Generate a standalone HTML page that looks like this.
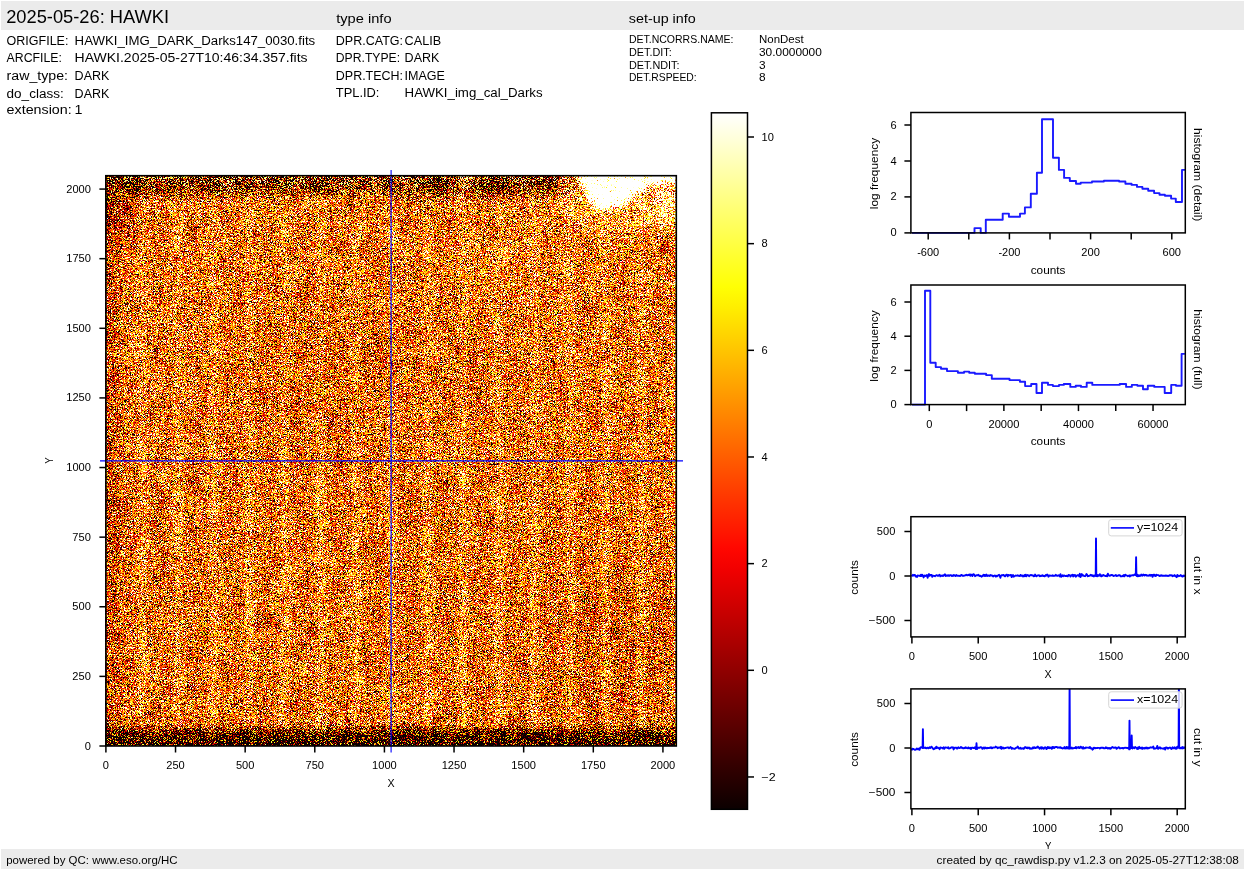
<!DOCTYPE html>
<html><head><meta charset="utf-8"><title>HAWKI raw display</title>
<style>html,body{margin:0;padding:0;background:#fff;overflow:hidden}svg{display:block;will-change:transform}text{font-family:"Liberation Sans",sans-serif}</style>
</head><body>
<svg width="1245" height="870" viewBox="0 0 1245 870">
<defs><linearGradient id="cbg" x1="0" y1="1" x2="0" y2="0"><stop offset="0.0000" stop-color="rgb(11,0,0)"/><stop offset="0.0312" stop-color="rgb(32,0,0)"/><stop offset="0.0625" stop-color="rgb(52,0,0)"/><stop offset="0.0938" stop-color="rgb(73,0,0)"/><stop offset="0.1250" stop-color="rgb(94,0,0)"/><stop offset="0.1562" stop-color="rgb(115,0,0)"/><stop offset="0.1875" stop-color="rgb(136,0,0)"/><stop offset="0.2188" stop-color="rgb(157,0,0)"/><stop offset="0.2500" stop-color="rgb(178,0,0)"/><stop offset="0.2812" stop-color="rgb(199,0,0)"/><stop offset="0.3125" stop-color="rgb(220,0,0)"/><stop offset="0.3438" stop-color="rgb(241,0,0)"/><stop offset="0.3750" stop-color="rgb(255,7,0)"/><stop offset="0.4062" stop-color="rgb(255,28,0)"/><stop offset="0.4375" stop-color="rgb(255,48,0)"/><stop offset="0.4688" stop-color="rgb(255,69,0)"/><stop offset="0.5000" stop-color="rgb(255,90,0)"/><stop offset="0.5312" stop-color="rgb(255,111,0)"/><stop offset="0.5625" stop-color="rgb(255,132,0)"/><stop offset="0.5938" stop-color="rgb(255,153,0)"/><stop offset="0.6250" stop-color="rgb(255,174,0)"/><stop offset="0.6562" stop-color="rgb(255,195,0)"/><stop offset="0.6875" stop-color="rgb(255,216,0)"/><stop offset="0.7188" stop-color="rgb(255,237,0)"/><stop offset="0.7500" stop-color="rgb(255,255,4)"/><stop offset="0.7812" stop-color="rgb(255,255,35)"/><stop offset="0.8125" stop-color="rgb(255,255,67)"/><stop offset="0.8438" stop-color="rgb(255,255,98)"/><stop offset="0.8750" stop-color="rgb(255,255,129)"/><stop offset="0.9062" stop-color="rgb(255,255,161)"/><stop offset="0.9375" stop-color="rgb(255,255,192)"/><stop offset="0.9688" stop-color="rgb(255,255,224)"/><stop offset="1.0000" stop-color="rgb(255,255,255)"/></linearGradient></defs>
<rect x="0" y="0" width="1245" height="870" fill="#fff"/>
<rect x="1.00" y="1.00" width="1243.00" height="29.00" fill="#ebebeb"/>
<text x="6.20" y="23.00" font-size="17.50" text-anchor="start" textLength="162.95" lengthAdjust="spacingAndGlyphs" fill="#000">2025-05-26: HAWKI</text>
<text x="336.20" y="22.60" font-size="13.12" text-anchor="start" textLength="55.34" lengthAdjust="spacingAndGlyphs" fill="#000">type info</text>
<text x="628.80" y="22.60" font-size="13.12" text-anchor="start" textLength="66.89" lengthAdjust="spacingAndGlyphs" fill="#000">set-up info</text>
<text x="6.60" y="44.85" font-size="13.12" text-anchor="start" textLength="61.85" lengthAdjust="spacingAndGlyphs" fill="#000">ORIGFILE:</text>
<text x="74.60" y="44.85" font-size="13.12" text-anchor="start" textLength="240.61" lengthAdjust="spacingAndGlyphs" fill="#000">HAWKI_IMG_DARK_Darks147_0030.fits</text>
<text x="6.60" y="61.90" font-size="13.12" text-anchor="start" textLength="55.29" lengthAdjust="spacingAndGlyphs" fill="#000">ARCFILE:</text>
<text x="74.60" y="61.90" font-size="13.12" text-anchor="start" textLength="233.00" lengthAdjust="spacingAndGlyphs" fill="#000">HAWKI.2025-05-27T10:46:34.357.fits</text>
<text x="6.60" y="79.90" font-size="13.12" text-anchor="start" textLength="61.41" lengthAdjust="spacingAndGlyphs" fill="#000">raw_type:</text>
<text x="74.60" y="79.90" font-size="13.12" text-anchor="start" textLength="34.84" lengthAdjust="spacingAndGlyphs" fill="#000">DARK</text>
<text x="6.60" y="97.70" font-size="13.12" text-anchor="start" textLength="57.07" lengthAdjust="spacingAndGlyphs" fill="#000">do_class:</text>
<text x="74.60" y="97.70" font-size="13.12" text-anchor="start" textLength="34.84" lengthAdjust="spacingAndGlyphs" fill="#000">DARK</text>
<text x="6.60" y="113.60" font-size="13.12" text-anchor="start" textLength="65.15" lengthAdjust="spacingAndGlyphs" fill="#000">extension:</text>
<text x="74.60" y="113.60" font-size="13.12" text-anchor="start" textLength="7.95" lengthAdjust="spacingAndGlyphs" fill="#000">1</text>
<text x="335.80" y="44.80" font-size="13.12" text-anchor="start" textLength="67.22" lengthAdjust="spacingAndGlyphs" fill="#000">DPR.CATG:</text>
<text x="404.60" y="44.80" font-size="13.12" text-anchor="start" textLength="36.51" lengthAdjust="spacingAndGlyphs" fill="#000">CALIB</text>
<text x="335.80" y="61.80" font-size="13.12" text-anchor="start" textLength="64.29" lengthAdjust="spacingAndGlyphs" fill="#000">DPR.TYPE:</text>
<text x="404.60" y="61.80" font-size="13.12" text-anchor="start" textLength="34.84" lengthAdjust="spacingAndGlyphs" fill="#000">DARK</text>
<text x="335.80" y="79.80" font-size="13.12" text-anchor="start" textLength="67.25" lengthAdjust="spacingAndGlyphs" fill="#000">DPR.TECH:</text>
<text x="404.60" y="79.80" font-size="13.12" text-anchor="start" textLength="40.39" lengthAdjust="spacingAndGlyphs" fill="#000">IMAGE</text>
<text x="335.80" y="96.60" font-size="13.12" text-anchor="start" textLength="43.63" lengthAdjust="spacingAndGlyphs" fill="#000">TPL.ID:</text>
<text x="404.60" y="96.60" font-size="13.12" text-anchor="start" textLength="138.02" lengthAdjust="spacingAndGlyphs" fill="#000">HAWKI_img_cal_Darks</text>
<text x="628.90" y="43.20" font-size="10.94" text-anchor="start" textLength="104.54" lengthAdjust="spacingAndGlyphs" fill="#000">DET.NCORRS.NAME:</text>
<text x="759.00" y="43.20" font-size="10.94" text-anchor="start" textLength="44.64" lengthAdjust="spacingAndGlyphs" fill="#000">NonDest</text>
<text x="628.90" y="55.90" font-size="10.94" text-anchor="start" textLength="42.80" lengthAdjust="spacingAndGlyphs" fill="#000">DET.DIT:</text>
<text x="759.00" y="55.90" font-size="10.94" text-anchor="start" textLength="62.86" lengthAdjust="spacingAndGlyphs" fill="#000">30.0000000</text>
<text x="628.90" y="68.60" font-size="10.94" text-anchor="start" textLength="50.58" lengthAdjust="spacingAndGlyphs" fill="#000">DET.NDIT:</text>
<text x="759.00" y="68.60" font-size="10.94" text-anchor="start" textLength="6.62" lengthAdjust="spacingAndGlyphs" fill="#000">3</text>
<text x="628.90" y="81.30" font-size="10.94" text-anchor="start" textLength="67.76" lengthAdjust="spacingAndGlyphs" fill="#000">DET.RSPEED:</text>
<text x="759.00" y="81.30" font-size="10.94" text-anchor="start" textLength="6.62" lengthAdjust="spacingAndGlyphs" fill="#000">8</text>
<filter id="imf" filterUnits="userSpaceOnUse" x="105.90" y="175.70" width="570.40" height="570.30" color-interpolation-filters="sRGB">
<feTurbulence type="fractalNoise" baseFrequency="1.7" numOctaves="1" seed="7" result="t"/>
<feColorMatrix in="t" type="matrix" values="1 0 0 0 0  1 0 0 0 0  1 0 0 0 0  0 0 0 0 1" result="n1"/>
<feTurbulence type="fractalNoise" baseFrequency="0.07" numOctaves="3" seed="12" result="t2"/>
<feColorMatrix in="t2" type="matrix" values="1 0 0 0 0  1 0 0 0 0  1 0 0 0 0  0 0 0 0 1" result="n2"/>
<feComposite in="n1" in2="n2" operator="arithmetic" k1="0" k2="0.95" k3="0.05" k4="0" result="n"/>
<feColorMatrix in="SourceGraphic" type="matrix" values="1 0 0 0 0  1 0 0 0 0  1 0 0 0 0  0 0 0 0 1" result="F"/>
<feColorMatrix in="SourceGraphic" type="matrix" values="0 -1 0 0 1  0 -1 0 0 1  0 -1 0 0 1  0 0 0 0 1" result="Mi"/>
<feColorMatrix in="SourceGraphic" type="matrix" values="0 1 0 0 0  0 1 0 0 0  0 1 0 0 0  0 0 0 0 1" result="M"/>
<feComposite in="F" in2="n" operator="arithmetic" k1="0" k2="2" k3="3.3" k4="-2.15" result="va"/>
<feComposite in="F" in2="n" operator="arithmetic" k1="0" k2="2" k3="8.0" k4="-4.5" result="vb"/>
<feComposite in="va" in2="Mi" operator="arithmetic" k1="1" k2="0" k3="0" k4="0" result="a1"/>
<feComposite in="vb" in2="M" operator="arithmetic" k1="1" k2="0" k3="0" k4="0" result="b1"/>
<feComposite in="a1" in2="b1" operator="arithmetic" k1="0" k2="1" k3="1" k4="0" result="v"/>
<feComponentTransfer in="v">
<feFuncR type="table" tableValues="0.0416 0.0621 0.0826 0.1031 0.1236 0.1441 0.1647 0.1852 0.2057 0.2262 0.2467 0.2672 0.2877 0.3082 0.3287 0.3492 0.3697 0.3903 0.4108 0.4313 0.4518 0.4723 0.4928 0.5133 0.5338 0.5543 0.5748 0.5954 0.6159 0.6364 0.6569 0.6774 0.6979 0.7184 0.7389 0.7594 0.7799 0.8004 0.821 0.8415 0.862 0.8825 0.903 0.9235 0.944 0.9645 0.985 1 1 1 1 1 1 1 1 1 1 1 1 1 1 1 1 1 1 1 1 1 1 1 1 1 1 1 1 1 1 1 1 1 1 1 1 1 1 1 1 1 1 1 1 1 1 1 1 1 1 1 1 1 1 1 1 1 1 1 1 1 1 1 1 1 1 1 1 1 1 1 1 1 1 1 1 1 1 1 1 1 1"/>
<feFuncG type="table" tableValues="0 0 0 0 0 0 0 0 0 0 0 0 0 0 0 0 0 0 0 0 0 0 0 0 0 0 0 0 0 0 0 0 0 0 0 0 0 0 0 0 0 0 0 0 0 0 0 0.0055 0.026 0.0466 0.0671 0.0876 0.1081 0.1286 0.1491 0.1696 0.1901 0.2106 0.2311 0.2516 0.2721 0.2926 0.3132 0.3337 0.3542 0.3747 0.3952 0.4157 0.4362 0.4567 0.4772 0.4977 0.5182 0.5387 0.5592 0.5798 0.6003 0.6208 0.6413 0.6618 0.6823 0.7028 0.7233 0.7438 0.7643 0.7848 0.8053 0.8258 0.8464 0.8669 0.8874 0.9079 0.9284 0.9489 0.9694 0.9899 1 1 1 1 1 1 1 1 1 1 1 1 1 1 1 1 1 1 1 1 1 1 1 1 1 1 1 1 1 1 1 1 1"/>
<feFuncB type="table" tableValues="0 0 0 0 0 0 0 0 0 0 0 0 0 0 0 0 0 0 0 0 0 0 0 0 0 0 0 0 0 0 0 0 0 0 0 0 0 0 0 0 0 0 0 0 0 0 0 0 0 0 0 0 0 0 0 0 0 0 0 0 0 0 0 0 0 0 0 0 0 0 0 0 0 0 0 0 0 0 0 0 0 0 0 0 0 0 0 0 0 0 0 0 0 0 0 0 0.0156 0.0464 0.0771 0.1079 0.1387 0.1694 0.2002 0.231 0.2617 0.2925 0.3232 0.354 0.3848 0.4155 0.4463 0.4771 0.5078 0.5386 0.5693 0.6001 0.6309 0.6616 0.6924 0.7231 0.7539 0.7847 0.8154 0.8462 0.877 0.9077 0.9385 0.9692 1"/>
<feFuncA type="identity"/>
</feComponentTransfer>
</filter>
<linearGradient id="strpB" gradientUnits="userSpaceOnUse" x1="89.08" y1="0" x2="124.725" y2="0" spreadMethod="repeat">
<stop offset="0" stop-color="#000" stop-opacity="0.0595"/><stop offset="0.3" stop-color="#000" stop-opacity="0.0425"/><stop offset="0.42" stop-color="#000" stop-opacity="0"/><stop offset="0.58" stop-color="#000" stop-opacity="0"/><stop offset="0.7" stop-color="#000" stop-opacity="0.0425"/><stop offset="1" stop-color="#000" stop-opacity="0.0595"/>
</linearGradient>
<linearGradient id="strpR" gradientUnits="userSpaceOnUse" x1="89.08" y1="0" x2="124.725" y2="0" spreadMethod="repeat">
<stop offset="0.3" stop-color="#f00" stop-opacity="0"/><stop offset="0.5" stop-color="#f00" stop-opacity="0.085"/><stop offset="0.7" stop-color="#f00" stop-opacity="0"/>
</linearGradient>
<linearGradient id="vfade" x1="0" y1="0" x2="0" y2="1"><stop offset="0" stop-color="#fff" stop-opacity="0.6"/><stop offset="0.45" stop-color="#fff" stop-opacity="0.7"/><stop offset="0.55" stop-color="#fff" stop-opacity="1"/><stop offset="1" stop-color="#fff" stop-opacity="1"/></linearGradient>
<mask id="smask" maskUnits="userSpaceOnUse" x="105.9" y="175.7" width="570.4" height="570.3"><rect x="105.9" y="175.7" width="570.4" height="570.3" fill="url(#vfade)"/></mask>
<linearGradient id="topv" x1="0" y1="0" x2="0" y2="1"><stop offset="0" stop-color="#0f0" stop-opacity="0.8"/><stop offset="0.6" stop-color="#0f0" stop-opacity="0.4"/><stop offset="1" stop-color="#0f0" stop-opacity="0"/></linearGradient>
<linearGradient id="botv" x1="0" y1="1" x2="0" y2="0"><stop offset="0" stop-color="#0f0" stop-opacity="0.7"/><stop offset="0.6" stop-color="#0f0" stop-opacity="0.35"/><stop offset="1" stop-color="#0f0" stop-opacity="0"/></linearGradient>
<linearGradient id="topb" x1="0" y1="0" x2="0" y2="1"><stop offset="0" stop-color="#000" stop-opacity="0.22"/><stop offset="0.6" stop-color="#000" stop-opacity="0.15"/><stop offset="1" stop-color="#000" stop-opacity="0"/></linearGradient>
<linearGradient id="botb" x1="0" y1="1" x2="0" y2="0"><stop offset="0" stop-color="#000" stop-opacity="0.7"/><stop offset="0.5" stop-color="#000" stop-opacity="0.5"/><stop offset="1" stop-color="#000" stop-opacity="0"/></linearGradient>
<linearGradient id="leftb" x1="0" y1="0" x2="1" y2="0"><stop offset="0" stop-color="#000" stop-opacity="0.2"/><stop offset="1" stop-color="#000" stop-opacity="0"/></linearGradient>
<filter id="bl" x="-50%" y="-50%" width="200%" height="200%"><feGaussianBlur stdDeviation="3"/></filter>
<filter id="bl2" x="-50%" y="-50%" width="200%" height="200%"><feGaussianBlur stdDeviation="5"/></filter>
<filter id="bl8" x="-50%" y="-50%" width="200%" height="200%"><feGaussianBlur stdDeviation="9"/></filter>
<filter id="bl20" x="-50%" y="-50%" width="200%" height="200%"><feGaussianBlur stdDeviation="20"/></filter>
<clipPath id="imclip"><rect x="105.9" y="175.7" width="570.4" height="570.3"/></clipPath>

<g filter="url(#imf)"><g clip-path="url(#imclip)">
<rect x="105.90" y="175.70" width="570.40" height="570.30" fill="rgb(135,0,0)"/>
<g mask="url(#smask)"><rect x="105.90" y="175.70" width="570.40" height="570.30" fill="url(#strpB)"/><rect x="105.90" y="175.70" width="570.40" height="570.30" fill="url(#strpR)"/></g>
<ellipse cx="111.9" cy="200.7" rx="14" ry="40" fill="#000" fill-opacity="0.35" filter="url(#bl20)"/>
<ellipse cx="320" cy="370" rx="90" ry="70" fill="#000" fill-opacity="0.03" filter="url(#bl20)"/>
<ellipse cx="460" cy="365" rx="45" ry="40" fill="#000" fill-opacity="0.03" filter="url(#bl20)"/>
<ellipse cx="610" cy="640" rx="70" ry="70" fill="#000" fill-opacity="0.05" filter="url(#bl20)"/>
<ellipse cx="520" cy="260" rx="80" ry="40" fill="#f00" fill-opacity="0.04" filter="url(#bl20)"/>
<rect x="105.90" y="175.70" width="18" height="570.30" fill="url(#leftb)"/>
<rect x="105.90" y="175.70" width="570.40" height="26" fill="url(#topb)"/>
<ellipse cx="137" cy="185.7" rx="14" ry="8" fill="#000" fill-opacity="0.35" filter="url(#bl)"/>
<ellipse cx="170" cy="185.7" rx="12" ry="8" fill="#000" fill-opacity="0.3" filter="url(#bl)"/>
<ellipse cx="212" cy="185.7" rx="10" ry="8" fill="#000" fill-opacity="0.28" filter="url(#bl)"/>
<ellipse cx="245" cy="185.7" rx="11" ry="8" fill="#000" fill-opacity="0.3" filter="url(#bl)"/>
<ellipse cx="277" cy="185.7" rx="12" ry="8" fill="#000" fill-opacity="0.3" filter="url(#bl)"/>
<ellipse cx="320" cy="185.7" rx="14" ry="8" fill="#000" fill-opacity="0.35" filter="url(#bl)"/>
<ellipse cx="356" cy="185.7" rx="8" ry="8" fill="#000" fill-opacity="0.25" filter="url(#bl)"/>
<ellipse cx="390" cy="185.7" rx="8" ry="8" fill="#000" fill-opacity="0.28" filter="url(#bl)"/>
<ellipse cx="434" cy="185.7" rx="15" ry="8" fill="#000" fill-opacity="0.35" filter="url(#bl)"/>
<ellipse cx="495" cy="185.7" rx="18" ry="8" fill="#000" fill-opacity="0.35" filter="url(#bl)"/>
<ellipse cx="546" cy="185.7" rx="18" ry="8" fill="#000" fill-opacity="0.32" filter="url(#bl)"/>
<rect x="105.90" y="724.00" width="570.40" height="22" fill="url(#botb)"/>
<ellipse cx="142" cy="738.0" rx="14" ry="8" fill="#000" fill-opacity="0.24" filter="url(#bl)"/>
<ellipse cx="178" cy="738.0" rx="10" ry="8" fill="#000" fill-opacity="0.2" filter="url(#bl)"/>
<ellipse cx="211" cy="738.0" rx="9" ry="8" fill="#000" fill-opacity="0.2" filter="url(#bl)"/>
<ellipse cx="244" cy="738.0" rx="11" ry="8" fill="#000" fill-opacity="0.2" filter="url(#bl)"/>
<ellipse cx="290" cy="738.0" rx="12" ry="8" fill="#000" fill-opacity="0.16000000000000003" filter="url(#bl)"/>
<ellipse cx="357" cy="738.0" rx="18" ry="8" fill="#000" fill-opacity="0.24" filter="url(#bl)"/>
<ellipse cx="403" cy="738.0" rx="16" ry="8" fill="#000" fill-opacity="0.24" filter="url(#bl)"/>
<ellipse cx="427" cy="738.0" rx="12" ry="8" fill="#000" fill-opacity="0.24" filter="url(#bl)"/>
<ellipse cx="464" cy="738.0" rx="10" ry="8" fill="#000" fill-opacity="0.22400000000000003" filter="url(#bl)"/>
<ellipse cx="499" cy="738.0" rx="10" ry="8" fill="#000" fill-opacity="0.2" filter="url(#bl)"/>
<ellipse cx="535" cy="738.0" rx="10" ry="8" fill="#000" fill-opacity="0.16000000000000003" filter="url(#bl)"/>
<ellipse cx="602" cy="738.0" rx="12" ry="8" fill="#000" fill-opacity="0.2" filter="url(#bl)"/>
<ellipse cx="641" cy="738.0" rx="12" ry="8" fill="#000" fill-opacity="0.2" filter="url(#bl)"/>
<rect x="105.90" y="175.70" width="570.40" height="28" fill="url(#topv)" style="mix-blend-mode:screen"/>
<rect x="105.90" y="720.00" width="570.40" height="26" fill="url(#botv)" style="mix-blend-mode:screen"/>
<ellipse cx="615" cy="187.7" rx="62" ry="48" fill="#f00" fill-opacity="0.16" filter="url(#bl8)"/>
<rect x="652" y="175.7" width="30" height="50" fill="#f00" fill-opacity="0.3" filter="url(#bl2)"/>
<path d="M578,171.7 L581,181 C585,196 592,208 603,208 C616,207 628,202 638,194 C646,188 652,184 660,183 L680,183 L680,171.7 Z" fill="#f00" filter="url(#bl)"/>
</g></g>
<line x1="391.10" y1="170.00" x2="391.10" y2="752.60" stroke="#0000ff" stroke-width="1.1"/>
<line x1="100.00" y1="460.85" x2="683.00" y2="460.85" stroke="#0000ff" stroke-width="1.1"/>
<rect x="105.90" y="175.70" width="570.40" height="570.30" fill="none" stroke="#000" stroke-width="1.6" stroke-linecap="square"/>
<line x1="99.40" y1="746.00" x2="105.90" y2="746.00" stroke="#000" stroke-width="1.5"/>
<text x="90.90" y="749.54" font-size="10.21" text-anchor="end" textLength="6.17" lengthAdjust="spacingAndGlyphs" fill="#000">0</text>
<line x1="105.90" y1="746.00" x2="105.90" y2="752.50" stroke="#000" stroke-width="1.5"/>
<text x="105.90" y="768.70" font-size="10.21" text-anchor="middle" textLength="6.17" lengthAdjust="spacingAndGlyphs" fill="#000">0</text>
<line x1="99.40" y1="676.38" x2="105.90" y2="676.38" stroke="#000" stroke-width="1.5"/>
<text x="90.90" y="679.92" font-size="10.21" text-anchor="end" textLength="18.51" lengthAdjust="spacingAndGlyphs" fill="#000">250</text>
<line x1="175.53" y1="746.00" x2="175.53" y2="752.50" stroke="#000" stroke-width="1.5"/>
<text x="175.53" y="768.70" font-size="10.21" text-anchor="middle" textLength="18.51" lengthAdjust="spacingAndGlyphs" fill="#000">250</text>
<line x1="99.40" y1="606.77" x2="105.90" y2="606.77" stroke="#000" stroke-width="1.5"/>
<text x="90.90" y="610.31" font-size="10.21" text-anchor="end" textLength="18.51" lengthAdjust="spacingAndGlyphs" fill="#000">500</text>
<line x1="245.16" y1="746.00" x2="245.16" y2="752.50" stroke="#000" stroke-width="1.5"/>
<text x="245.16" y="768.70" font-size="10.21" text-anchor="middle" textLength="18.51" lengthAdjust="spacingAndGlyphs" fill="#000">500</text>
<line x1="99.40" y1="537.15" x2="105.90" y2="537.15" stroke="#000" stroke-width="1.5"/>
<text x="90.90" y="540.69" font-size="10.21" text-anchor="end" textLength="18.51" lengthAdjust="spacingAndGlyphs" fill="#000">750</text>
<line x1="314.79" y1="746.00" x2="314.79" y2="752.50" stroke="#000" stroke-width="1.5"/>
<text x="314.79" y="768.70" font-size="10.21" text-anchor="middle" textLength="18.51" lengthAdjust="spacingAndGlyphs" fill="#000">750</text>
<line x1="99.40" y1="467.53" x2="105.90" y2="467.53" stroke="#000" stroke-width="1.5"/>
<text x="90.90" y="471.07" font-size="10.21" text-anchor="end" textLength="24.68" lengthAdjust="spacingAndGlyphs" fill="#000">1000</text>
<line x1="384.42" y1="746.00" x2="384.42" y2="752.50" stroke="#000" stroke-width="1.5"/>
<text x="384.42" y="768.70" font-size="10.21" text-anchor="middle" textLength="24.68" lengthAdjust="spacingAndGlyphs" fill="#000">1000</text>
<line x1="99.40" y1="397.92" x2="105.90" y2="397.92" stroke="#000" stroke-width="1.5"/>
<text x="90.90" y="401.46" font-size="10.21" text-anchor="end" textLength="24.68" lengthAdjust="spacingAndGlyphs" fill="#000">1250</text>
<line x1="454.04" y1="746.00" x2="454.04" y2="752.50" stroke="#000" stroke-width="1.5"/>
<text x="454.04" y="768.70" font-size="10.21" text-anchor="middle" textLength="24.68" lengthAdjust="spacingAndGlyphs" fill="#000">1250</text>
<line x1="99.40" y1="328.30" x2="105.90" y2="328.30" stroke="#000" stroke-width="1.5"/>
<text x="90.90" y="331.84" font-size="10.21" text-anchor="end" textLength="24.68" lengthAdjust="spacingAndGlyphs" fill="#000">1500</text>
<line x1="523.67" y1="746.00" x2="523.67" y2="752.50" stroke="#000" stroke-width="1.5"/>
<text x="523.67" y="768.70" font-size="10.21" text-anchor="middle" textLength="24.68" lengthAdjust="spacingAndGlyphs" fill="#000">1500</text>
<line x1="99.40" y1="258.68" x2="105.90" y2="258.68" stroke="#000" stroke-width="1.5"/>
<text x="90.90" y="262.22" font-size="10.21" text-anchor="end" textLength="24.68" lengthAdjust="spacingAndGlyphs" fill="#000">1750</text>
<line x1="593.30" y1="746.00" x2="593.30" y2="752.50" stroke="#000" stroke-width="1.5"/>
<text x="593.30" y="768.70" font-size="10.21" text-anchor="middle" textLength="24.68" lengthAdjust="spacingAndGlyphs" fill="#000">1750</text>
<line x1="99.40" y1="189.07" x2="105.90" y2="189.07" stroke="#000" stroke-width="1.5"/>
<text x="90.90" y="192.61" font-size="10.21" text-anchor="end" textLength="24.68" lengthAdjust="spacingAndGlyphs" fill="#000">2000</text>
<line x1="662.93" y1="746.00" x2="662.93" y2="752.50" stroke="#000" stroke-width="1.5"/>
<text x="662.93" y="768.70" font-size="10.21" text-anchor="middle" textLength="24.68" lengthAdjust="spacingAndGlyphs" fill="#000">2000</text>
<text x="391.10" y="786.60" font-size="10.94" text-anchor="middle" textLength="7.12" lengthAdjust="spacingAndGlyphs" fill="#000">X</text>
<text transform="translate(52.60,460.70) rotate(-90)" x="0" y="0" font-size="10.94" text-anchor="middle" textLength="6.35" lengthAdjust="spacingAndGlyphs" fill="#000">Y</text>
<rect x="711.4" y="112.8" width="36.10" height="696.50" fill="url(#cbg)"/>
<rect x="711.40" y="112.80" width="36.10" height="696.50" fill="none" stroke="#000" stroke-width="1.5" stroke-linecap="square"/>
<line x1="747.50" y1="776.96" x2="754.00" y2="776.96" stroke="#000" stroke-width="1.5"/>
<text x="761.50" y="780.50" font-size="10.21" text-anchor="start" textLength="14.30" lengthAdjust="spacingAndGlyphs" fill="#000">−2</text>
<line x1="747.50" y1="670.30" x2="754.00" y2="670.30" stroke="#000" stroke-width="1.5"/>
<text x="761.50" y="673.84" font-size="10.21" text-anchor="start" textLength="6.17" lengthAdjust="spacingAndGlyphs" fill="#000">0</text>
<line x1="747.50" y1="563.64" x2="754.00" y2="563.64" stroke="#000" stroke-width="1.5"/>
<text x="761.50" y="567.18" font-size="10.21" text-anchor="start" textLength="6.17" lengthAdjust="spacingAndGlyphs" fill="#000">2</text>
<line x1="747.50" y1="456.98" x2="754.00" y2="456.98" stroke="#000" stroke-width="1.5"/>
<text x="761.50" y="460.52" font-size="10.21" text-anchor="start" textLength="6.17" lengthAdjust="spacingAndGlyphs" fill="#000">4</text>
<line x1="747.50" y1="350.32" x2="754.00" y2="350.32" stroke="#000" stroke-width="1.5"/>
<text x="761.50" y="353.86" font-size="10.21" text-anchor="start" textLength="6.17" lengthAdjust="spacingAndGlyphs" fill="#000">6</text>
<line x1="747.50" y1="243.66" x2="754.00" y2="243.66" stroke="#000" stroke-width="1.5"/>
<text x="761.50" y="247.20" font-size="10.21" text-anchor="start" textLength="6.17" lengthAdjust="spacingAndGlyphs" fill="#000">8</text>
<line x1="747.50" y1="137.00" x2="754.00" y2="137.00" stroke="#000" stroke-width="1.5"/>
<text x="761.50" y="140.54" font-size="10.21" text-anchor="start" textLength="12.34" lengthAdjust="spacingAndGlyphs" fill="#000">10</text>
<path d="M912.00,232.90 V232.90 H974.50 V228.10 H980.70 V232.90 H985.80 V219.80 H1002.70 V213.60 H1008.90 V216.70 H1020.00 V213.60 H1024.90 V207.40 H1030.80 V193.80 H1036.90 V172.70 H1042.00 V119.20 H1053.00 V157.80 H1058.90 V169.90 H1064.10 V177.90 H1069.80 V181.00 H1076.00 V183.80 H1080.70 V182.60 H1092.00 V181.50 H1103.90 V180.70 H1119.10 V181.50 H1125.40 V183.80 H1131.60 V184.90 H1137.00 V186.90 H1142.40 V188.80 H1148.20 V190.80 H1154.10 V193.10 H1159.50 V194.70 H1164.90 V195.80 H1171.10 V198.60 H1175.80 V202.00 H1182.00 V169.90 H1185.10" fill="none" stroke="#1a1aff" stroke-width="1.9" stroke-linejoin="round"/>
<path d="M912.00,404.60 V404.60 H925.00 V290.80 H930.30 V362.70 H935.70 V367.10 H941.00 V368.80 H947.00 V371.10 H957.90 V372.70 H964.10 V371.60 H969.20 V372.70 H974.80 V373.70 H986.10 V375.10 H991.80 V378.80 H1009.50 V380.10 H1019.90 V381.70 H1025.10 V386.10 H1031.20 V384.00 H1036.50 V393.00 H1042.00 V382.80 H1048.00 V384.90 H1052.90 V386.10 H1059.00 V384.90 H1063.80 V384.00 H1070.30 V386.90 H1075.70 V385.70 H1081.00 V386.90 H1086.70 V382.80 H1092.30 V384.90 H1119.70 V384.00 H1126.10 V386.90 H1131.80 V384.90 H1137.40 V385.70 H1143.00 V389.30 H1147.80 V385.70 H1154.30 V386.90 H1164.70 V393.00 H1171.20 V384.90 H1176.00 V385.70 H1181.60 V353.90 H1184.90" fill="none" stroke="#1a1aff" stroke-width="1.9" stroke-linejoin="round"/>
<clipPath id="cx"><rect x="910.9" y="516.7" width="274.4" height="120.2"/></clipPath>
<clipPath id="cy"><rect x="910.9" y="688.9" width="274.4" height="119.9"/></clipPath>
<path d="M911.60,574.93 L912.27,575.81 L912.94,574.87 L913.60,575.56 L914.27,574.93 L914.94,574.89 L915.61,576.44 L916.27,576.14 L916.94,577.01 L917.61,575.44 L918.28,575.65 L918.94,575.68 L919.61,575.75 L920.28,575.98 L920.95,574.62 L921.61,575.99 L922.28,574.79 L922.95,575.60 L923.62,577.42 L924.28,575.57 L924.95,575.44 L925.62,575.96 L926.29,575.66 L926.95,575.05 L927.62,577.79 L928.29,575.32 L928.96,574.09 L929.62,575.89 L930.29,574.94 L930.96,574.91 L931.63,574.90 L932.29,576.83 L932.96,575.61 L933.63,575.85 L934.30,575.91 L934.96,576.23 L935.63,575.57 L936.30,575.31 L936.97,575.27 L937.63,575.78 L938.30,575.75 L938.97,575.16 L939.64,574.75 L940.31,576.27 L940.97,575.98 L941.64,575.57 L942.31,575.38 L942.98,576.01 L943.64,575.24 L944.31,575.40 L944.98,574.27 L945.65,576.00 L946.31,575.83 L946.98,575.34 L947.65,575.77 L948.32,575.22 L948.98,575.94 L949.65,575.47 L950.32,575.14 L950.99,575.25 L951.65,575.99 L952.32,575.51 L952.99,575.93 L953.66,574.94 L954.32,575.56 L954.99,575.40 L955.66,576.06 L956.33,574.99 L956.99,575.63 L957.66,575.70 L958.33,575.92 L959.00,575.73 L959.66,575.95 L960.33,575.98 L961.00,575.13 L961.67,574.90 L962.33,575.70 L963.00,575.62 L963.67,575.71 L964.34,575.57 L965.00,575.54 L965.67,575.12 L966.34,574.74 L967.01,575.34 L967.68,575.32 L968.34,574.66 L969.01,575.13 L969.68,574.51 L970.35,575.88 L971.01,574.54 L971.68,575.06 L972.35,576.09 L973.02,574.49 L973.68,574.26 L974.35,574.91 L975.02,576.18 L975.69,575.72 L976.35,575.40 L977.02,575.09 L977.69,575.23 L978.36,574.84 L979.02,575.61 L979.69,576.06 L980.36,575.63 L981.03,576.18 L981.69,576.65 L982.36,575.98 L983.03,575.29 L983.70,574.70 L984.36,576.02 L985.03,575.06 L985.70,576.08 L986.37,574.55 L987.03,575.62 L987.70,576.02 L988.37,575.46 L989.04,575.54 L989.70,575.98 L990.37,575.12 L991.04,575.62 L991.71,575.39 L992.37,575.66 L993.04,576.43 L993.71,575.82 L994.38,575.63 L995.05,575.50 L995.71,576.62 L996.38,575.76 L997.05,576.34 L997.72,575.83 L998.38,575.04 L999.05,574.77 L999.72,575.80 L1000.39,577.80 L1001.05,575.52 L1001.72,575.26 L1002.39,575.38 L1003.06,574.97 L1003.72,574.84 L1004.39,576.20 L1005.06,576.40 L1005.73,575.24 L1006.39,574.75 L1007.06,574.74 L1007.73,576.31 L1008.40,574.92 L1009.06,575.38 L1009.73,575.30 L1010.40,575.05 L1011.07,574.92 L1011.73,577.10 L1012.40,575.41 L1013.07,575.08 L1013.74,576.69 L1014.40,576.11 L1015.07,575.89 L1015.74,575.47 L1016.41,575.61 L1017.07,575.70 L1017.74,575.28 L1018.41,575.80 L1019.08,575.84 L1019.74,576.05 L1020.41,574.89 L1021.08,575.82 L1021.75,575.53 L1022.42,575.38 L1023.08,576.46 L1023.75,575.99 L1024.42,575.01 L1025.09,576.27 L1025.75,574.62 L1026.42,576.26 L1027.09,575.47 L1027.76,574.97 L1028.42,575.45 L1029.09,576.25 L1029.76,575.47 L1030.43,575.01 L1031.09,575.35 L1031.76,575.05 L1032.43,575.46 L1033.10,575.53 L1033.76,576.22 L1034.43,576.07 L1035.10,574.52 L1035.77,575.87 L1036.43,576.31 L1037.10,575.62 L1037.77,575.48 L1038.44,575.41 L1039.10,575.15 L1039.77,576.30 L1040.44,576.15 L1041.11,575.60 L1041.77,575.97 L1042.44,575.20 L1043.11,576.00 L1043.78,575.82 L1044.44,576.35 L1045.11,576.05 L1045.78,574.99 L1046.45,575.54 L1047.11,574.60 L1047.78,575.11 L1048.45,576.74 L1049.12,575.82 L1049.79,575.41 L1050.45,575.59 L1051.12,575.85 L1051.79,575.67 L1052.46,575.32 L1053.12,575.97 L1053.79,575.64 L1054.46,575.87 L1055.13,575.55 L1055.79,574.76 L1056.46,575.59 L1057.13,575.72 L1057.80,575.69 L1058.46,575.32 L1059.13,575.47 L1059.80,576.50 L1060.47,574.19 L1061.13,576.85 L1061.80,576.11 L1062.47,575.31 L1063.14,576.15 L1063.80,575.53 L1064.47,575.55 L1065.14,575.85 L1065.81,576.15 L1066.47,575.71 L1067.14,575.91 L1067.81,576.37 L1068.48,574.98 L1069.14,575.22 L1069.81,575.19 L1070.48,576.59 L1071.15,575.49 L1071.81,575.57 L1072.48,574.65 L1073.15,576.50 L1073.82,574.91 L1074.48,575.65 L1075.15,575.04 L1075.82,576.67 L1076.49,576.12 L1077.16,575.32 L1077.82,575.32 L1078.49,575.18 L1079.16,576.29 L1079.83,573.80 L1080.49,577.10 L1081.16,575.71 L1081.83,574.06 L1082.50,575.57 L1083.16,575.18 L1083.83,575.78 L1084.50,576.10 L1085.17,576.18 L1085.83,575.21 L1086.50,573.97 L1087.17,574.86 L1087.84,576.26 L1088.50,575.94 L1089.17,575.89 L1089.84,575.46 L1090.51,574.84 L1091.17,575.62 L1091.84,575.01 L1092.51,575.92 L1093.18,575.42 L1093.84,576.38 L1094.51,575.50 L1095.18,575.15 L1095.70,575.91 L1096.00,538.50 L1096.30,575.91 L1096.51,575.69 L1097.18,576.33 L1097.85,575.05 L1098.52,575.80 L1099.18,575.53 L1099.85,574.14 L1100.52,575.81 L1101.19,576.41 L1101.85,575.26 L1102.52,575.90 L1103.19,574.92 L1103.86,575.24 L1104.53,575.70 L1105.19,576.02 L1105.86,576.02 L1106.53,575.54 L1107.20,576.32 L1107.86,573.72 L1108.53,575.23 L1109.20,575.62 L1109.87,575.87 L1110.53,575.23 L1111.20,575.23 L1111.87,574.92 L1112.54,575.31 L1113.20,575.75 L1113.87,575.99 L1114.54,575.71 L1115.21,575.49 L1115.87,574.91 L1116.54,575.95 L1117.21,575.81 L1117.88,575.70 L1118.54,575.24 L1119.21,575.21 L1119.88,575.10 L1120.55,576.36 L1121.21,576.33 L1121.88,576.28 L1122.55,575.73 L1123.22,576.16 L1123.88,575.06 L1124.55,576.19 L1125.22,574.73 L1125.89,575.33 L1126.55,575.43 L1127.22,575.78 L1127.89,576.21 L1128.56,575.95 L1129.22,575.31 L1129.89,576.51 L1130.56,575.48 L1131.23,575.41 L1131.90,575.45 L1132.56,575.18 L1133.23,575.52 L1133.90,575.08 L1134.57,574.48 L1135.23,575.08 L1135.80,574.68 L1136.10,557.30 L1136.40,574.68 L1136.57,575.98 L1137.24,574.56 L1137.90,576.36 L1138.57,575.26 L1139.24,576.00 L1139.91,575.32 L1140.57,575.84 L1141.24,574.59 L1141.91,575.34 L1142.58,575.66 L1143.24,574.47 L1143.91,574.91 L1144.58,575.53 L1145.25,575.02 L1145.91,574.79 L1146.58,575.65 L1147.25,575.38 L1147.92,575.79 L1148.58,575.46 L1149.25,575.58 L1149.92,574.80 L1150.59,575.66 L1151.25,574.94 L1151.92,574.84 L1152.59,576.83 L1153.26,574.75 L1153.92,575.40 L1154.59,574.73 L1155.26,576.15 L1155.93,575.96 L1156.59,574.62 L1157.26,575.17 L1157.93,575.08 L1158.60,575.09 L1159.27,575.87 L1159.93,576.13 L1160.60,575.57 L1161.27,575.19 L1161.94,575.81 L1162.60,575.50 L1163.27,575.85 L1163.94,575.68 L1164.61,575.78 L1165.27,575.73 L1165.94,575.52 L1166.61,575.68 L1167.28,575.99 L1167.94,575.66 L1168.61,575.95 L1169.28,575.62 L1169.95,575.13 L1170.61,575.18 L1171.28,575.65 L1171.95,575.22 L1172.62,576.18 L1173.28,575.63 L1173.95,575.77 L1174.62,575.09 L1175.29,576.05 L1175.95,576.40 L1176.62,577.15 L1177.29,574.92 L1177.96,576.31 L1178.62,575.78 L1179.29,575.87 L1179.96,576.05 L1180.63,575.11 L1181.29,575.53 L1181.96,576.28 L1182.63,576.62 L1183.30,575.61 L1183.96,575.98 L1184.63,575.82 L1185.30,574.99" fill="none" stroke="#0000ff" stroke-width="1.9" clip-path="url(#cx)" stroke-linejoin="round"/>
<path d="M911.60,750.49 L912.27,748.69 L912.94,748.82 L913.60,748.98 L914.27,749.51 L914.94,749.86 L915.61,749.53 L916.27,749.34 L916.94,748.41 L917.61,749.23 L918.28,749.45 L918.94,748.58 L919.61,749.81 L920.28,747.80 L920.95,747.17 L921.61,747.55 L922.28,747.04 L922.60,748.04 L922.90,729.10 L923.20,748.04 L923.62,747.68 L924.28,747.63 L924.95,748.05 L925.62,747.57 L926.29,748.33 L926.95,748.01 L927.62,747.64 L928.29,748.36 L928.96,748.02 L929.62,747.22 L930.29,748.08 L930.96,747.06 L931.63,746.72 L932.29,747.55 L932.96,748.64 L933.63,749.20 L934.30,748.89 L934.96,748.05 L935.63,748.35 L936.30,746.64 L936.97,747.90 L937.63,747.39 L938.30,747.98 L938.97,748.10 L939.64,749.13 L940.31,747.35 L940.97,747.57 L941.64,747.84 L942.31,747.89 L942.98,748.48 L943.64,747.26 L944.31,748.87 L944.98,747.68 L945.65,747.38 L946.31,747.64 L946.98,747.59 L947.65,748.00 L948.32,747.20 L948.98,748.50 L949.65,748.39 L950.32,748.11 L950.99,747.54 L951.65,747.26 L952.32,747.64 L952.99,747.31 L953.66,749.45 L954.32,747.97 L954.99,747.60 L955.66,747.76 L956.33,747.59 L956.99,748.64 L957.66,748.32 L958.33,747.22 L959.00,747.73 L959.66,748.09 L960.33,747.76 L961.00,746.95 L961.67,747.91 L962.33,747.78 L963.00,748.37 L963.67,748.39 L964.34,747.77 L965.00,748.15 L965.67,747.33 L966.34,747.86 L967.01,748.13 L967.68,748.29 L968.34,747.38 L969.01,748.42 L969.68,748.39 L970.35,747.84 L971.01,748.97 L971.68,747.79 L972.35,747.78 L973.02,747.70 L973.68,748.14 L974.35,747.86 L975.02,747.35 L975.69,748.98 L976.20,748.48 L976.50,743.30 L976.80,748.48 L977.02,749.10 L977.69,747.72 L978.36,747.67 L979.02,747.71 L979.69,747.72 L980.36,747.21 L981.03,747.31 L981.69,747.46 L982.36,748.81 L983.03,748.50 L983.70,747.59 L984.36,748.60 L985.03,747.42 L985.70,748.10 L986.37,748.32 L987.03,747.69 L987.70,748.19 L988.37,747.87 L989.04,747.98 L989.70,747.76 L990.37,747.94 L991.04,747.22 L991.71,748.35 L992.37,748.07 L993.04,747.42 L993.71,747.60 L994.38,747.61 L995.05,747.38 L995.71,746.62 L996.38,747.24 L997.05,747.22 L997.72,748.23 L998.38,747.59 L999.05,747.41 L999.72,747.48 L1000.39,748.24 L1001.05,746.75 L1001.72,748.85 L1002.39,747.68 L1003.06,747.52 L1003.72,748.57 L1004.39,748.18 L1005.06,748.05 L1005.73,748.04 L1006.39,747.60 L1007.06,747.53 L1007.73,747.37 L1008.40,747.48 L1009.06,748.33 L1009.73,747.84 L1010.40,746.97 L1011.07,747.62 L1011.73,748.86 L1012.40,748.04 L1013.07,748.38 L1013.74,748.59 L1014.40,748.84 L1015.07,748.70 L1015.74,748.00 L1016.41,747.70 L1017.07,747.64 L1017.74,746.54 L1018.41,747.80 L1019.08,748.61 L1019.74,748.16 L1020.41,747.64 L1021.08,748.82 L1021.75,748.34 L1022.42,748.65 L1023.08,748.20 L1023.75,748.90 L1024.42,747.90 L1025.09,747.02 L1025.75,747.47 L1026.42,748.05 L1027.09,747.41 L1027.76,748.37 L1028.42,747.58 L1029.09,747.52 L1029.76,748.63 L1030.43,748.16 L1031.09,748.86 L1031.76,748.36 L1032.43,748.46 L1033.10,747.31 L1033.76,748.19 L1034.43,747.18 L1035.10,747.73 L1035.77,748.13 L1036.43,747.53 L1037.10,747.63 L1037.77,746.57 L1038.44,747.38 L1039.10,747.87 L1039.77,748.84 L1040.44,747.80 L1041.11,747.12 L1041.77,748.74 L1042.44,747.51 L1043.11,747.77 L1043.78,748.85 L1044.44,747.85 L1045.11,747.18 L1045.78,747.60 L1046.45,749.09 L1047.11,748.31 L1047.78,746.97 L1048.45,748.11 L1049.12,747.33 L1049.79,748.17 L1050.45,747.63 L1051.12,747.44 L1051.79,748.86 L1052.46,747.00 L1053.12,748.05 L1053.79,747.07 L1054.46,748.00 L1055.13,747.14 L1055.79,747.06 L1056.46,746.97 L1057.13,747.24 L1057.80,747.78 L1058.46,747.35 L1059.13,747.37 L1059.80,747.85 L1060.47,747.16 L1061.13,747.95 L1061.80,747.97 L1062.47,748.45 L1063.14,748.21 L1063.80,748.06 L1064.47,747.10 L1065.14,748.46 L1065.81,748.40 L1066.47,746.88 L1067.14,748.42 L1067.81,747.31 L1068.48,747.29 L1069.14,748.73 L1069.30,747.76 L1069.60,680.00 L1069.90,747.76 L1070.48,748.43 L1071.15,748.61 L1071.81,747.53 L1072.48,748.48 L1073.15,748.41 L1073.82,748.07 L1074.48,748.05 L1075.15,748.03 L1075.82,746.89 L1076.49,748.34 L1077.16,747.66 L1077.82,747.47 L1078.49,747.04 L1079.16,748.14 L1079.83,747.99 L1080.49,746.72 L1081.16,746.95 L1081.83,747.87 L1082.50,748.47 L1083.16,747.04 L1083.83,748.50 L1084.50,748.07 L1085.17,748.24 L1085.83,747.42 L1086.50,747.70 L1087.17,747.60 L1087.84,747.67 L1088.50,747.78 L1089.17,747.95 L1089.84,746.90 L1090.51,748.26 L1091.17,748.57 L1091.84,748.18 L1092.51,749.64 L1093.18,748.97 L1093.84,747.64 L1094.51,747.96 L1095.18,748.30 L1095.85,747.97 L1096.51,748.12 L1097.18,748.04 L1097.85,747.82 L1098.52,747.89 L1099.18,747.86 L1099.85,748.46 L1100.52,747.99 L1101.19,747.74 L1101.85,747.74 L1102.52,747.94 L1103.19,747.61 L1103.86,748.26 L1104.53,748.11 L1105.19,748.30 L1105.86,747.36 L1106.53,747.96 L1107.20,747.74 L1107.86,748.55 L1108.53,747.93 L1109.20,748.46 L1109.87,747.90 L1110.53,748.80 L1111.20,748.09 L1111.87,747.38 L1112.54,747.00 L1113.20,747.67 L1113.87,747.92 L1114.54,747.75 L1115.21,747.44 L1115.87,747.53 L1116.54,748.79 L1117.21,748.05 L1117.88,747.80 L1118.54,747.14 L1119.21,747.53 L1119.88,748.45 L1120.55,748.26 L1121.21,748.08 L1121.88,748.05 L1122.55,747.84 L1123.22,748.44 L1123.88,748.01 L1124.55,747.82 L1125.22,747.88 L1125.89,747.71 L1126.55,747.88 L1127.22,748.23 L1127.89,747.96 L1128.56,747.58 L1129.20,749.32 L1129.50,720.60 L1129.80,749.32 L1129.89,747.51 L1130.56,748.25 L1131.23,747.95 L1131.40,748.00 L1131.70,735.50 L1132.00,748.00 L1132.56,748.41 L1133.23,747.29 L1133.90,747.56 L1134.57,748.21 L1135.23,747.02 L1135.90,747.69 L1136.57,747.84 L1137.24,749.01 L1137.90,747.54 L1138.57,748.77 L1139.24,746.80 L1139.91,747.97 L1140.57,747.83 L1141.24,748.47 L1141.91,747.39 L1142.58,748.80 L1143.24,748.11 L1143.91,748.02 L1144.58,748.59 L1145.25,747.63 L1145.91,748.30 L1146.58,747.55 L1147.25,748.52 L1147.92,747.75 L1148.58,748.31 L1149.25,748.05 L1149.92,747.59 L1150.59,747.32 L1151.25,747.62 L1151.92,747.48 L1152.59,747.53 L1153.26,746.54 L1153.92,748.79 L1154.59,748.50 L1155.26,748.49 L1155.93,748.29 L1156.59,748.14 L1157.26,745.98 L1157.93,748.76 L1158.60,748.50 L1159.27,747.51 L1159.93,747.27 L1160.60,748.48 L1161.27,748.24 L1161.94,748.37 L1162.60,748.58 L1163.27,748.51 L1163.94,748.75 L1164.61,748.00 L1165.27,749.60 L1165.94,747.35 L1166.61,747.87 L1167.28,747.79 L1167.94,748.68 L1168.61,748.01 L1169.28,747.90 L1169.95,747.50 L1170.61,748.00 L1171.28,748.97 L1171.95,748.45 L1172.62,747.30 L1173.28,748.40 L1173.95,748.17 L1174.62,747.28 L1175.29,748.72 L1175.95,747.81 L1176.62,748.73 L1177.29,746.64 L1177.96,747.80 L1178.60,747.58 L1178.90,680.00 L1179.20,747.58 L1179.29,747.73 L1179.96,748.40 L1180.63,747.89 L1181.29,747.39 L1181.96,748.42 L1182.63,747.10 L1183.30,748.22 L1183.96,747.51 L1184.63,747.37 L1185.30,748.44" fill="none" stroke="#0000ff" stroke-width="1.9" clip-path="url(#cy)" stroke-linejoin="round"/>
<rect x="910.90" y="112.50" width="274.40" height="120.40" fill="none" stroke="#000" stroke-width="1.5" stroke-linecap="square"/>
<line x1="904.40" y1="232.90" x2="910.90" y2="232.90" stroke="#000" stroke-width="1.5"/>
<text x="896.80" y="236.44" font-size="10.21" text-anchor="end" textLength="6.17" lengthAdjust="spacingAndGlyphs" fill="#000">0</text>
<line x1="904.40" y1="196.90" x2="910.90" y2="196.90" stroke="#000" stroke-width="1.5"/>
<text x="896.80" y="200.44" font-size="10.21" text-anchor="end" textLength="6.17" lengthAdjust="spacingAndGlyphs" fill="#000">2</text>
<line x1="904.40" y1="161.00" x2="910.90" y2="161.00" stroke="#000" stroke-width="1.5"/>
<text x="896.80" y="164.54" font-size="10.21" text-anchor="end" textLength="6.17" lengthAdjust="spacingAndGlyphs" fill="#000">4</text>
<line x1="904.40" y1="125.00" x2="910.90" y2="125.00" stroke="#000" stroke-width="1.5"/>
<text x="896.80" y="128.54" font-size="10.21" text-anchor="end" textLength="6.17" lengthAdjust="spacingAndGlyphs" fill="#000">6</text>
<line x1="928.20" y1="232.90" x2="928.20" y2="239.40" stroke="#000" stroke-width="1.5"/>
<line x1="968.80" y1="232.90" x2="968.80" y2="239.40" stroke="#000" stroke-width="1.5"/>
<line x1="1009.40" y1="232.90" x2="1009.40" y2="239.40" stroke="#000" stroke-width="1.5"/>
<line x1="1050.00" y1="232.90" x2="1050.00" y2="239.40" stroke="#000" stroke-width="1.5"/>
<line x1="1090.60" y1="232.90" x2="1090.60" y2="239.40" stroke="#000" stroke-width="1.5"/>
<line x1="1131.20" y1="232.90" x2="1131.20" y2="239.40" stroke="#000" stroke-width="1.5"/>
<line x1="1171.80" y1="232.90" x2="1171.80" y2="239.40" stroke="#000" stroke-width="1.5"/>
<text x="928.20" y="256.00" font-size="10.21" text-anchor="middle" textLength="22.01" lengthAdjust="spacingAndGlyphs" fill="#000">-600</text>
<text x="1009.40" y="256.00" font-size="10.21" text-anchor="middle" textLength="22.01" lengthAdjust="spacingAndGlyphs" fill="#000">-200</text>
<text x="1090.60" y="256.00" font-size="10.21" text-anchor="middle" textLength="18.51" lengthAdjust="spacingAndGlyphs" fill="#000">200</text>
<text x="1171.80" y="256.00" font-size="10.21" text-anchor="middle" textLength="18.51" lengthAdjust="spacingAndGlyphs" fill="#000">600</text>
<text x="1048.10" y="273.90" font-size="10.94" text-anchor="middle" textLength="34.76" lengthAdjust="spacingAndGlyphs" fill="#000">counts</text>
<text transform="translate(877.60,173.50) rotate(-90)" x="0" y="0" font-size="10.94" text-anchor="middle" textLength="71.32" lengthAdjust="spacingAndGlyphs" fill="#000">log frequency</text>
<text transform="translate(1194.30,174.70) rotate(90)" x="0" y="0" font-size="10.94" text-anchor="middle" textLength="93.38" lengthAdjust="spacingAndGlyphs" fill="#000">histogram (detail)</text>
<rect x="910.90" y="285.00" width="274.40" height="119.60" fill="none" stroke="#000" stroke-width="1.5" stroke-linecap="square"/>
<line x1="904.40" y1="404.60" x2="910.90" y2="404.60" stroke="#000" stroke-width="1.5"/>
<text x="896.80" y="408.14" font-size="10.21" text-anchor="end" textLength="6.17" lengthAdjust="spacingAndGlyphs" fill="#000">0</text>
<line x1="904.40" y1="370.40" x2="910.90" y2="370.40" stroke="#000" stroke-width="1.5"/>
<text x="896.80" y="373.94" font-size="10.21" text-anchor="end" textLength="6.17" lengthAdjust="spacingAndGlyphs" fill="#000">2</text>
<line x1="904.40" y1="336.20" x2="910.90" y2="336.20" stroke="#000" stroke-width="1.5"/>
<text x="896.80" y="339.74" font-size="10.21" text-anchor="end" textLength="6.17" lengthAdjust="spacingAndGlyphs" fill="#000">4</text>
<line x1="904.40" y1="302.00" x2="910.90" y2="302.00" stroke="#000" stroke-width="1.5"/>
<text x="896.80" y="305.54" font-size="10.21" text-anchor="end" textLength="6.17" lengthAdjust="spacingAndGlyphs" fill="#000">6</text>
<line x1="929.30" y1="404.60" x2="929.30" y2="411.10" stroke="#000" stroke-width="1.5"/>
<line x1="966.59" y1="404.60" x2="966.59" y2="411.10" stroke="#000" stroke-width="1.5"/>
<line x1="1003.88" y1="404.60" x2="1003.88" y2="411.10" stroke="#000" stroke-width="1.5"/>
<line x1="1041.17" y1="404.60" x2="1041.17" y2="411.10" stroke="#000" stroke-width="1.5"/>
<line x1="1078.46" y1="404.60" x2="1078.46" y2="411.10" stroke="#000" stroke-width="1.5"/>
<line x1="1115.75" y1="404.60" x2="1115.75" y2="411.10" stroke="#000" stroke-width="1.5"/>
<line x1="1153.04" y1="404.60" x2="1153.04" y2="411.10" stroke="#000" stroke-width="1.5"/>
<text x="929.30" y="427.70" font-size="10.21" text-anchor="middle" textLength="6.17" lengthAdjust="spacingAndGlyphs" fill="#000">0</text>
<text x="1003.90" y="427.70" font-size="10.21" text-anchor="middle" textLength="30.86" lengthAdjust="spacingAndGlyphs" fill="#000">20000</text>
<text x="1078.50" y="427.70" font-size="10.21" text-anchor="middle" textLength="30.86" lengthAdjust="spacingAndGlyphs" fill="#000">40000</text>
<text x="1153.00" y="427.70" font-size="10.21" text-anchor="middle" textLength="30.86" lengthAdjust="spacingAndGlyphs" fill="#000">60000</text>
<text x="1048.10" y="445.40" font-size="10.94" text-anchor="middle" textLength="34.76" lengthAdjust="spacingAndGlyphs" fill="#000">counts</text>
<text transform="translate(877.60,346.00) rotate(-90)" x="0" y="0" font-size="10.94" text-anchor="middle" textLength="71.32" lengthAdjust="spacingAndGlyphs" fill="#000">log frequency</text>
<text transform="translate(1194.30,349.40) rotate(90)" x="0" y="0" font-size="10.94" text-anchor="middle" textLength="80.18" lengthAdjust="spacingAndGlyphs" fill="#000">histogram (full)</text>
<rect x="910.90" y="516.70" width="274.40" height="120.20" fill="none" stroke="#000" stroke-width="1.5" stroke-linecap="square"/>
<line x1="904.40" y1="531.50" x2="910.90" y2="531.50" stroke="#000" stroke-width="1.5"/>
<text x="895.40" y="535.04" font-size="10.21" text-anchor="end" textLength="18.51" lengthAdjust="spacingAndGlyphs" fill="#000">500</text>
<line x1="904.40" y1="576.00" x2="910.90" y2="576.00" stroke="#000" stroke-width="1.5"/>
<text x="895.40" y="579.54" font-size="10.21" text-anchor="end" textLength="6.17" lengthAdjust="spacingAndGlyphs" fill="#000">0</text>
<line x1="904.40" y1="620.50" x2="910.90" y2="620.50" stroke="#000" stroke-width="1.5"/>
<text x="895.40" y="624.04" font-size="10.21" text-anchor="end" textLength="26.64" lengthAdjust="spacingAndGlyphs" fill="#000">−500</text>
<line x1="911.90" y1="636.90" x2="911.90" y2="643.40" stroke="#000" stroke-width="1.5"/>
<text x="911.90" y="659.90" font-size="10.21" text-anchor="middle" textLength="6.17" lengthAdjust="spacingAndGlyphs" fill="#000">0</text>
<line x1="978.22" y1="636.90" x2="978.22" y2="643.40" stroke="#000" stroke-width="1.5"/>
<text x="978.22" y="659.90" font-size="10.21" text-anchor="middle" textLength="18.51" lengthAdjust="spacingAndGlyphs" fill="#000">500</text>
<line x1="1044.55" y1="636.90" x2="1044.55" y2="643.40" stroke="#000" stroke-width="1.5"/>
<text x="1044.55" y="659.90" font-size="10.21" text-anchor="middle" textLength="24.68" lengthAdjust="spacingAndGlyphs" fill="#000">1000</text>
<line x1="1110.88" y1="636.90" x2="1110.88" y2="643.40" stroke="#000" stroke-width="1.5"/>
<text x="1110.88" y="659.90" font-size="10.21" text-anchor="middle" textLength="24.68" lengthAdjust="spacingAndGlyphs" fill="#000">1500</text>
<line x1="1177.20" y1="636.90" x2="1177.20" y2="643.40" stroke="#000" stroke-width="1.5"/>
<text x="1177.20" y="659.90" font-size="10.21" text-anchor="middle" textLength="24.68" lengthAdjust="spacingAndGlyphs" fill="#000">2000</text>
<text x="1048.10" y="677.70" font-size="10.94" text-anchor="middle" textLength="7.12" lengthAdjust="spacingAndGlyphs" fill="#000">X</text>
<text transform="translate(858.00,577.50) rotate(-90)" x="0" y="0" font-size="10.94" text-anchor="middle" textLength="34.76" lengthAdjust="spacingAndGlyphs" fill="#000">counts</text>
<text transform="translate(1194.30,575.20) rotate(90)" x="0" y="0" font-size="10.94" text-anchor="middle" textLength="38.64" lengthAdjust="spacingAndGlyphs" fill="#000">cut in x</text>
<rect x="910.90" y="688.90" width="274.40" height="119.90" fill="none" stroke="#000" stroke-width="1.5" stroke-linecap="square"/>
<line x1="904.40" y1="703.50" x2="910.90" y2="703.50" stroke="#000" stroke-width="1.5"/>
<text x="895.40" y="707.04" font-size="10.21" text-anchor="end" textLength="18.51" lengthAdjust="spacingAndGlyphs" fill="#000">500</text>
<line x1="904.40" y1="748.00" x2="910.90" y2="748.00" stroke="#000" stroke-width="1.5"/>
<text x="895.40" y="751.54" font-size="10.21" text-anchor="end" textLength="6.17" lengthAdjust="spacingAndGlyphs" fill="#000">0</text>
<line x1="904.40" y1="792.50" x2="910.90" y2="792.50" stroke="#000" stroke-width="1.5"/>
<text x="895.40" y="796.04" font-size="10.21" text-anchor="end" textLength="26.64" lengthAdjust="spacingAndGlyphs" fill="#000">−500</text>
<line x1="911.90" y1="808.80" x2="911.90" y2="815.30" stroke="#000" stroke-width="1.5"/>
<text x="911.90" y="831.80" font-size="10.21" text-anchor="middle" textLength="6.17" lengthAdjust="spacingAndGlyphs" fill="#000">0</text>
<line x1="978.22" y1="808.80" x2="978.22" y2="815.30" stroke="#000" stroke-width="1.5"/>
<text x="978.22" y="831.80" font-size="10.21" text-anchor="middle" textLength="18.51" lengthAdjust="spacingAndGlyphs" fill="#000">500</text>
<line x1="1044.55" y1="808.80" x2="1044.55" y2="815.30" stroke="#000" stroke-width="1.5"/>
<text x="1044.55" y="831.80" font-size="10.21" text-anchor="middle" textLength="24.68" lengthAdjust="spacingAndGlyphs" fill="#000">1000</text>
<line x1="1110.88" y1="808.80" x2="1110.88" y2="815.30" stroke="#000" stroke-width="1.5"/>
<text x="1110.88" y="831.80" font-size="10.21" text-anchor="middle" textLength="24.68" lengthAdjust="spacingAndGlyphs" fill="#000">1500</text>
<line x1="1177.20" y1="808.80" x2="1177.20" y2="815.30" stroke="#000" stroke-width="1.5"/>
<text x="1177.20" y="831.80" font-size="10.21" text-anchor="middle" textLength="24.68" lengthAdjust="spacingAndGlyphs" fill="#000">2000</text>
<text x="1048.10" y="849.60" font-size="10.94" text-anchor="middle" textLength="6.35" lengthAdjust="spacingAndGlyphs" fill="#000">Y</text>
<text transform="translate(858.00,749.50) rotate(-90)" x="0" y="0" font-size="10.94" text-anchor="middle" textLength="34.76" lengthAdjust="spacingAndGlyphs" fill="#000">counts</text>
<text transform="translate(1194.30,747.20) rotate(90)" x="0" y="0" font-size="10.94" text-anchor="middle" textLength="38.64" lengthAdjust="spacingAndGlyphs" fill="#000">cut in y</text>
<rect x="1108.7" y="519.60" width="73.4" height="16.3" rx="2.5" ry="2.5" fill="#fff" fill-opacity="0.8" stroke="#d6d6d6" stroke-width="1"/>
<line x1="1110.80" y1="527.90" x2="1134.00" y2="527.90" stroke="#0000ff" stroke-width="1.6"/>
<text x="1136.90" y="530.90" font-size="10.94" text-anchor="start" textLength="41.34" lengthAdjust="spacingAndGlyphs" fill="#000">y=1024</text>
<rect x="1108.7" y="691.80" width="73.4" height="16.3" rx="2.5" ry="2.5" fill="#fff" fill-opacity="0.8" stroke="#d6d6d6" stroke-width="1"/>
<line x1="1110.80" y1="700.10" x2="1134.00" y2="700.10" stroke="#0000ff" stroke-width="1.6"/>
<text x="1136.90" y="703.10" font-size="10.94" text-anchor="start" textLength="41.34" lengthAdjust="spacingAndGlyphs" fill="#000">x=1024</text>
<rect x="1.00" y="849.00" width="1243.00" height="20.00" fill="#ebebeb"/>
<text x="6.20" y="863.90" font-size="10.94" text-anchor="start" textLength="171.36" lengthAdjust="spacingAndGlyphs" fill="#000">powered by QC: www.eso.org/HC</text>
<text x="1238.80" y="863.90" font-size="10.94" text-anchor="end" textLength="302.23" lengthAdjust="spacingAndGlyphs" fill="#000">created by qc_rawdisp.py v1.2.3 on 2025-05-27T12:38:08</text>
</svg></body></html>
